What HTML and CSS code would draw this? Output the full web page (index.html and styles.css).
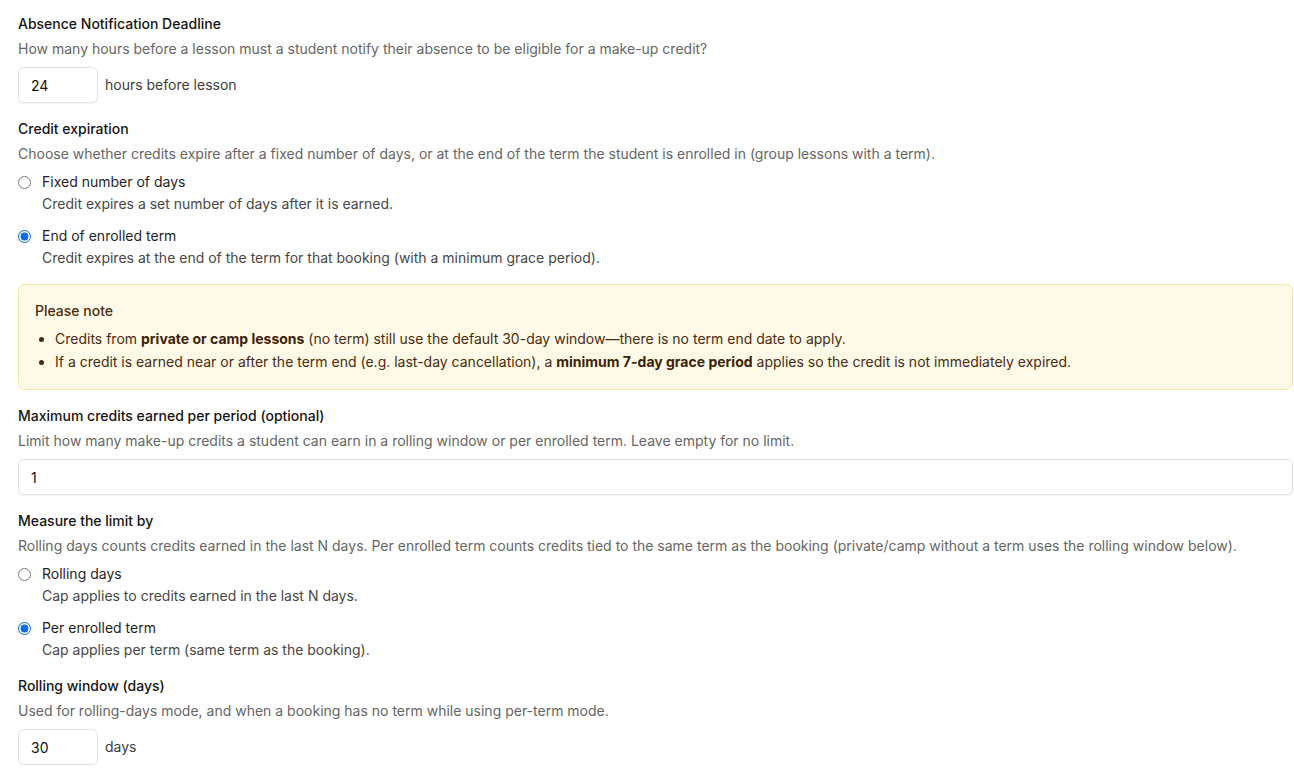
FILE: index.html
```html
<!DOCTYPE html>
<html lang="en">
<head>
    <meta charset="UTF-8">
    <title>Make-up Credit Settings</title>
    <link rel="stylesheet" href="styles.css">
</head>
<body>
    <div class="settings">
        <div class="field">
            <label class="field-label" for="notice">Absence Notification Deadline</label>
            <p class="field-help">How many hours before a lesson must a student notify their absence to be eligible for a make-up credit?</p>
            <div class="input-row">
                <input type="text" id="notice" class="text-input small" value="24">
                <span class="unit">hours before lesson</span>
            </div>
        </div>

        <div class="field">
            <div class="field-label">Credit expiration</div>
            <p class="field-help">Choose whether credits expire after a fixed number of days, or at the end of the term the student is enrolled in (group lessons with a term).</p>
            <div class="options">
                <label class="option">
                    <input type="radio" name="expiry">
                    <span class="option-text">
                        <span class="option-title">Fixed number of days</span>
                        <span class="option-sub">Credit expires a set number of days after it is earned.</span>
                    </span>
                </label>
                <label class="option">
                    <input type="radio" name="expiry" checked>
                    <span class="option-text">
                        <span class="option-title">End of enrolled term</span>
                        <span class="option-sub">Credit expires at the end of the term for that booking (with a minimum grace period).</span>
                    </span>
                </label>
            </div>
        </div>

        <div class="note">
            <div class="note-title">Please note</div>
            <ul>
                <li>Credits from <strong>private or camp lessons</strong> (no term) still use the default 30-day window—there is no term end date to apply.</li>
                <li>If a credit is earned near or after the term end (e.g. last-day cancellation), a <strong>minimum 7-day grace period</strong> applies so the credit is not immediately expired.</li>
            </ul>
        </div>

        <div class="field">
            <label class="field-label" for="maxCredits">Maximum credits earned per period (optional)</label>
            <p class="field-help">Limit how many make-up credits a student can earn in a rolling window or per enrolled term. Leave empty for no limit.</p>
            <input type="text" id="maxCredits" class="text-input full" value="1">
        </div>

        <div class="field">
            <div class="field-label">Measure the limit by</div>
            <p class="field-help">Rolling days counts credits earned in the last N days. Per enrolled term counts credits tied to the same term as the booking (private/camp without a term uses the rolling window below).</p>
            <div class="options">
                <label class="option">
                    <input type="radio" name="measure">
                    <span class="option-text">
                        <span class="option-title">Rolling days</span>
                        <span class="option-sub">Cap applies to credits earned in the last N days.</span>
                    </span>
                </label>
                <label class="option">
                    <input type="radio" name="measure" checked>
                    <span class="option-text">
                        <span class="option-title">Per enrolled term</span>
                        <span class="option-sub">Cap applies per term (same term as the booking).</span>
                    </span>
                </label>
            </div>
        </div>

        <div class="field">
            <label class="field-label" for="window">Rolling window (days)</label>
            <p class="field-help">Used for rolling-days mode, and when a booking has no term while using per-term mode.</p>
            <div class="input-row">
                <input type="text" id="window" class="text-input small" value="30">
                <span class="unit">days</span>
            </div>
        </div>
    </div>
</body>
</html>
```

FILE: styles.css
```css
* {
    box-sizing: border-box;
    margin: 0;
    padding: 0;
}

html, body {
    background-color: #ffffff;
    font-family: Inter, "Noto Sans", Arial, sans-serif;
    font-size: 14px;
    line-height: 20px;
    color: #1c1c1c;
    overflow: hidden;
}

.settings {
    display: flex;
    flex-direction: column;
    gap: 16px;
    padding: 14px 1px 0 18px;
}

.field {
    display: flex;
    flex-direction: column;
}

.field-label {
    display: block;
    font-weight: 500;
    color: #151515;
    margin-bottom: 5px;
}

.field-help {
    color: #666666;
    margin-bottom: 8px;
}

.input-row {
    display: flex;
    align-items: center;
    gap: 7px;
}

.text-input {
    height: 36px;
    padding: 0 12px;
    border: 1px solid #e3e3e3;
    border-radius: 6px;
    box-shadow: 0 1px 2px rgba(0, 0, 0, 0.06);
    font-family: inherit;
    font-size: 14px;
    color: #111;
    background: #fff;
    outline: none;
}

.text-input.small {
    width: 80px;
}

.text-input.full {
    width: 100%;
}

.unit {
    color: #3d3d3d;
}

/* radio groups */
.options {
    display: flex;
    flex-direction: column;
    gap: 12px;
}

.option {
    display: flex;
    align-items: flex-start;
    gap: 11px;
    cursor: pointer;
}

.option input[type="radio"] {
    width: 13px;
    height: 13px;
    margin: 4px 0 0 0;
    accent-color: #0b6bea;
}

.option-text {
    display: flex;
    flex-direction: column;
    gap: 2px;
}

.option-title {
    color: #1f1f1f;
}

.option-sub {
    color: #474747;
}

/* note box */
.note {
    background-color: #fefae7;
    border: 1px solid #f4e6a6;
    border-radius: 7px;
    padding: 16px 16px 16px 16px;
    color: #4a2a12;
}

.note-title {
    font-weight: 500;
    margin-bottom: 6px;
}

.note ul {
    padding-left: 20px;
}

.note li {
    line-height: 23px;
}

.note strong {
    font-weight: 700;
    color: #3d1f08;
}
```
